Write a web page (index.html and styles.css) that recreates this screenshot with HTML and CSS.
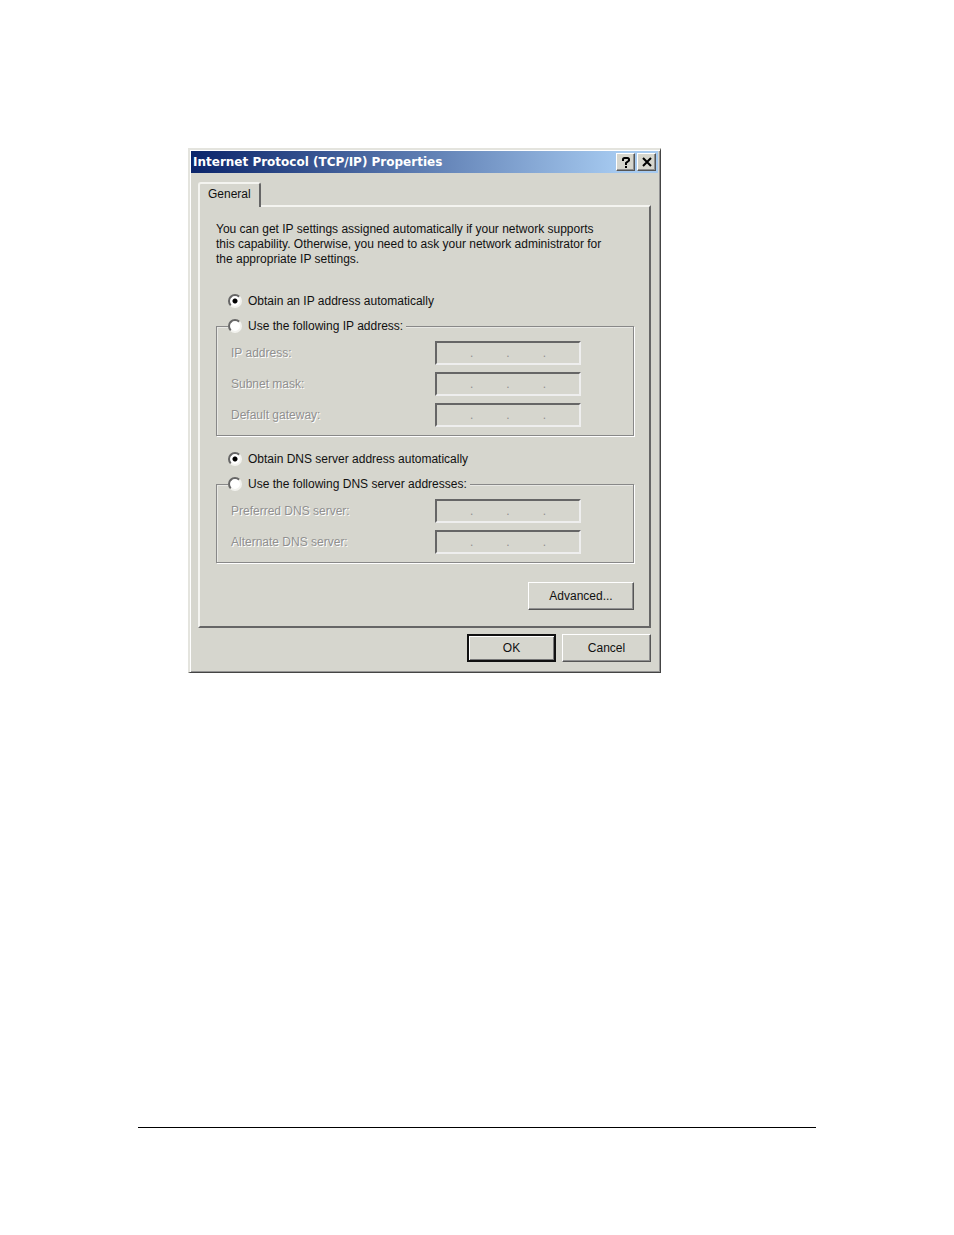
FILE: index.html
```html
<!DOCTYPE html>
<html lang="en">
<head>
    <meta charset="UTF-8">
    <title>Internet Protocol (TCP/IP) Properties</title>
    <link rel="stylesheet" href="styles.css">
</head>
<body>
    <main>
        <form class="dialog">
            <div class="title-bar">
                <h1>Internet Protocol (TCP/IP) Properties</h1>
                <button type="button" class="title-button" aria-label="Help">
                    <svg width="10" height="11" viewBox="0 0 10 11">
                        <path d="M2 4V2.500Q2 1 3.500 1H6.500Q8 1 8 2.500V3.500L5 6V8" fill="none" stroke="#000" stroke-width="2"/>
                        <path d="M4 9h2v2H4z"/>
                    </svg>
                </button>
                <button type="button" class="title-button" aria-label="Close">
                    <svg width="10" height="11" viewBox="0 0 10 11">
                        <path d="M1 1L9 9M9 1L1 9" stroke="#000" stroke-width="2"/>
                    </svg>
                </button>
            </div>

            <div class="tabs">
                <button type="button" class="tab">General</button>
            </div>
            <div class="panel">
                <p>You can get IP settings assigned automatically if your network supports<br>
                this capability. Otherwise, you need to ask your network administrator for<br>
                the appropriate IP settings.</p>

                <label class="option"><input type="radio" name="ip" checked>Obtain an IP address automatically</label>
                <fieldset>
                    <legend><label class="option"><input type="radio" name="ip">Use the following IP address:</label></legend>
                    <div class="row">
                        <label for="address">IP address:</label>
                        <div class="ip-field">
                            <input type="text" id="address" disabled>.<input type="text" aria-label="IP address part 2" disabled>.<input type="text" aria-label="IP address part 3" disabled>.<input type="text" aria-label="IP address part 4" disabled>
                        </div>
                    </div>
                    <div class="row">
                        <label for="mask">Subnet mask:</label>
                        <div class="ip-field">
                            <input type="text" id="mask" disabled>.<input type="text" aria-label="Subnet mask part 2" disabled>.<input type="text" aria-label="Subnet mask part 3" disabled>.<input type="text" aria-label="Subnet mask part 4" disabled>
                        </div>
                    </div>
                    <div class="row">
                        <label for="gateway">Default gateway:</label>
                        <div class="ip-field">
                            <input type="text" id="gateway" disabled>.<input type="text" aria-label="Default gateway part 2" disabled>.<input type="text" aria-label="Default gateway part 3" disabled>.<input type="text" aria-label="Default gateway part 4" disabled>
                        </div>
                    </div>
                </fieldset>

                <label class="option"><input type="radio" name="dns" checked>Obtain DNS server address automatically</label>
                <fieldset>
                    <legend><label class="option"><input type="radio" name="dns">Use the following DNS server addresses:</label></legend>
                    <div class="row">
                        <label for="preferred">Preferred DNS server:</label>
                        <div class="ip-field">
                            <input type="text" id="preferred" disabled>.<input type="text" aria-label="Preferred DNS server part 2" disabled>.<input type="text" aria-label="Preferred DNS server part 3" disabled>.<input type="text" aria-label="Preferred DNS server part 4" disabled>
                        </div>
                    </div>
                    <div class="row">
                        <label for="alternate">Alternate DNS server:</label>
                        <div class="ip-field">
                            <input type="text" id="alternate" disabled>.<input type="text" aria-label="Alternate DNS server part 2" disabled>.<input type="text" aria-label="Alternate DNS server part 3" disabled>.<input type="text" aria-label="Alternate DNS server part 4" disabled>
                        </div>
                    </div>
                </fieldset>

                <button type="button" class="button advanced">Advanced...</button>
            </div>

            <div class="actions">
                <button type="button" class="button default">OK</button>
                <button type="button" class="button">Cancel</button>
            </div>
        </form>
    </main>
    <hr>
</body>
</html>
```
FILE: styles.css
```css
* {
    box-sizing: border-box;
}
body {
    display: flex;
    flex-direction: column;
    min-height: 100vh;
    margin: 0;
    padding: 148px 138px 107px;
    background: #fff;
    color: #111;
    font: 12px/15px "Liberation Sans", Arial, sans-serif;
}
main {
    padding-left: 50px;
}
hr {
    width: 100%;
    margin: auto 0 0;
    border: 0;
    border-top: 1px solid #000;
}
.dialog {
    max-width: 473px;
    padding: 1px 2px 1px 1px;
    background: #d6d6ce;
    border: 2px solid;
    border-color: #e4e4de #444 #444 #e4e4de;
    border-width: 2px 1px 1px 2px;
    box-shadow: inset 1px 1px #fff, inset -1px -1px #949494;
}
.title-bar {
    display: flex;
    align-items: center;
    height: 22px;
    padding: 0 2px;
    background: linear-gradient(to right, #0a246a, #a6caf0 92%);
}
h1 {
    flex: 1;
    margin: 0;
    color: #fff;
    font: bold 12px/16px "DejaVu Sans Condensed", "DejaVu Sans", sans-serif;
    font-family: "DejaVu Sans", sans-serif;
}
button {
    color: #111;
    font: inherit;
    background: #d6d6ce;
    border: 1px solid;
    border-color: #fff #555 #555 #fff;
    box-shadow: inset -1px -1px #909090;
}
.title-button {
    display: flex;
    align-items: center;
    justify-content: center;
    width: 19px;
    height: 18px;
    margin-left: 2px;
    padding: 0;
}
.tabs {
    padding: 9px 7px 0;
}
.tab {
    position: relative;
    display: block;
    height: 25px;
    margin-bottom: -2px;
    padding: 0 8px 2px;
    border-width: 2px 2px 0;
    border-color: #f4f4f0 #666 #666 #f4f4f0;
    border-radius: 3px 3px 0 0;
    box-shadow: none;
}
.panel {
    margin: 0 7px;
    padding: 15px 15px 16px 16px;
    border: 2px solid;
    border-color: #f4f4f0 #666 #666 #f4f4f0;
}
p {
    margin: 0 0 26px;
}
.option {
    display: flex;
    align-items: center;
    gap: 6px;
    height: 16px;
}
.panel > .option {
    margin-left: 12px;
}
.option input {
    appearance: none;
    width: 14px;
    height: 14px;
    margin: 0;
    background: #fff;
    border: 2px solid;
    border-color: #666 #f2f2ee #f2f2ee #666;
    border-radius: 50%;
}
.option input:checked {
    background: radial-gradient(circle, #000 2px, #fff 3px);
}
fieldset {
    margin: 9px 0 15px;
    padding: 7px 14px 8px;
    border: 1px solid #888;
    box-shadow: 1px 1px #fff, inset 1px 1px #e8e8e4;
}
legend {
    margin-left: -3px;
    padding: 0 3px 0 0;
    background: #d6d6ce;
}
.row {
    display: flex;
    align-items: center;
    justify-content: space-between;
    margin-bottom: 7px;
    padding-right: 38px;
    color: #909090;
    text-shadow: 1px 1px #fff;
}
.row:last-child {
    margin-bottom: 0;
}
.ip-field {
    display: flex;
    align-items: center;
    width: 146px;
    height: 24px;
    border: 2px solid;
    border-color: #666 #eee #eee #666;
    text-shadow: none;
}
.ip-field input {
    flex: 1;
    min-width: 0;
    height: 18px;
    padding: 0;
    border: 0;
    background: none;
    font: inherit;
    text-align: center;
}
.button {
    width: 89px;
    height: 28px;
    padding: 0;
}
.advanced {
    display: block;
    width: 106px;
    margin: 19px 0 0 auto;
}
.default {
    border: 2px solid #111;
    box-shadow: inset 1px 1px #fff, inset -1px -1px #777;
}
.actions {
    display: flex;
    justify-content: flex-end;
    gap: 6px;
    padding: 6px 7px 9px;
}
```
